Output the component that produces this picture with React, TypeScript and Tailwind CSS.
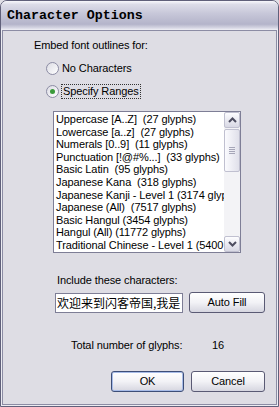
import React from "react";

const items = [
  "Uppercase [A..Z]  (27 glyphs)",
  "Lowercase [a..z]  (27 glyphs)",
  "Numerals [0..9]  (11 glyphs)",
  "Punctuation [!@#%...]  (33 glyphs)",
  "Basic Latin  (95 glyphs)",
  "Japanese Kana  (318 glyphs)",
  "Japanese Kanji - Level 1 (3174 glyphs)",
  "Japanese (All)  (7517 glyphs)",
  "Basic Hangul (3454 glyphs)",
  "Hangul (All) (11772 glyphs)",
  "Traditional Chinese - Level 1 (5400 glyphs)",
];

function Radio({ checked }: { checked?: boolean }) {
  return (
    <div className="w-[13px] h-[13px] rounded-full border border-[#8c8ca4] bg-gradient-to-br from-[#dcdce4] to-[#ffffff] flex items-center justify-center shrink-0">
      {checked && <div className="w-[5px] h-[5px] rounded-full bg-[#3a9a3a]" />}
    </div>
  );
}

function SbButton({ up }: { up?: boolean }) {
  return (
    <div className="w-[16px] h-[16px] rounded-[2px] border border-[#c0c0d0] bg-gradient-to-b from-[#fdfdff] to-[#d8d8e4] flex items-center justify-center">
      <svg width="9" height="6" viewBox="0 0 9 6">
        {up ? (
          <path d="M1 5 L4.5 1.5 L8 5" stroke="#4d4d60" strokeWidth="2" fill="none" />
        ) : (
          <path d="M1 1 L4.5 4.5 L8 1" stroke="#4d4d60" strokeWidth="2" fill="none" />
        )}
      </svg>
    </div>
  );
}

function Button({ label, def }: { label: string; def?: boolean }) {
  return (
    <div
      className={`h-[21px] rounded-[3px] border ${
        def ? "border-[#3d4e78]" : "border-[#5a5a74]"
      } bg-gradient-to-b from-[#ffffff] via-[#f2f2f6] to-[#d6d6e0] flex items-center justify-center text-[11px] text-black ${
        def ? "shadow-[inset_0_0_0_1px_#a8bce8]" : ""
      }`}
    >
      {label}
    </div>
  );
}

export default function App() {
  return (
    <div
      className="w-[279px] h-[407px] bg-[#e0dfe6] overflow-hidden"
      style={{ fontFamily: '"Liberation Sans", Arial, sans-serif' }}
    >
      <div className="w-[279px] h-[407px] border border-[#60607a] rounded-t-[7px] flex flex-col bg-[#ececf2]">
        <div className="h-[29px] rounded-t-[6px] bg-[linear-gradient(to_bottom,#f8f8fc_0%,#dcdce8_12%,#c6c6d8_45%,#b4b4ca_80%,#d4d4e2_92%,#f0f0f6_100%)] flex items-center pl-[6px]">
          <span
            className="text-[13.3px] font-bold text-black"
            style={{ fontFamily: '"Liberation Mono", "Courier New", monospace' }}
          >
            Character Options
          </span>
        </div>
        <div className="flex-1 mx-[1px] mb-[1px] border border-[#8c8ca4] bg-[#dedde4] flex flex-col text-[11px] text-black leading-[13px] tracking-[-0.1px]">
          <div className="pl-[31px] pt-[8px]">Embed font outlines for:</div>
          <div className="pl-[43px] mt-[9px] flex items-center gap-[3px] h-[14px]">
            <Radio />
            <span>No Characters</span>
          </div>
          <div className="pl-[43px] mt-[9px] flex items-center gap-[2px] h-[14px]">
            <Radio checked />
            <span className="border border-dotted border-[#333] px-[1px]">Specify Ranges</span>
          </div>
          <div className="ml-[50px] mt-[13px] w-[188px] h-[142px] border border-[#7e7e96] bg-white flex">
            <div className="flex-1 overflow-hidden pl-[2px] pt-[1px]">
              {items.map((t) => (
                <div key={t} className="h-[12.6px] whitespace-pre leading-[12.6px]">
                  {t}
                </div>
              ))}
            </div>
            <div className="w-[16px] bg-[#f3f3f6] flex flex-col">
              <SbButton up />
              <div className="flex-1 pt-[1px]">
                <div className="h-[43px] rounded-[2px] border border-[#c0c0d0] bg-gradient-to-r from-[#fbfbfe] to-[#e0e0ea] flex flex-col items-center justify-center gap-[1px]">
                  <div className="w-[6px] h-[1px] bg-[#a6a6b8]" />
                  <div className="w-[6px] h-[1px] bg-[#a6a6b8]" />
                  <div className="w-[6px] h-[1px] bg-[#a6a6b8]" />
                  <div className="w-[6px] h-[1px] bg-[#a6a6b8]" />
                </div>
              </div>
              <SbButton />
            </div>
          </div>
          <div className="pl-[54px] mt-[21px]">Include these characters:</div>
          <div className="pl-[52px] mt-[5px] flex items-center gap-[6px]">
            <div
              className="w-[128px] h-[20px] border border-[#7e7e96] bg-white text-[12px] leading-[18px] pl-[1px] overflow-hidden whitespace-nowrap tracking-normal"
              style={{ fontFamily: '"Noto Sans CJK SC", "Liberation Sans", sans-serif' }}
            >
              欢迎来到闪客帝国,我是
            </div>
            <div className="w-[76px]">
              <Button label="Auto Fill" />
            </div>
          </div>
          <div className="pl-[68px] mt-[26px] flex">
            <span className="w-[141px]">Total number of glyphs:</span>
            <span>16</span>
          </div>
          <div className="pl-[108px] mt-[19px] flex gap-[7px]">
            <div className="w-[73px]">
              <Button label="OK" def />
            </div>
            <div className="w-[74px]">
              <Button label="Cancel" />
            </div>
          </div>
        </div>
      </div>
    </div>
  );
}
